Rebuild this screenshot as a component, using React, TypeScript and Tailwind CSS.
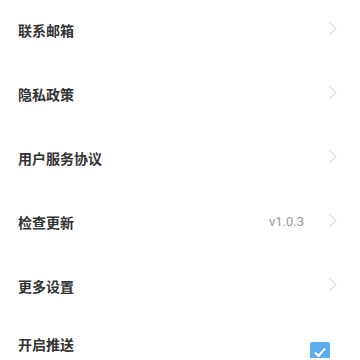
import React from "react";

const Chevron = () => (
  <svg width="9" height="15" viewBox="0 0 9 15" className="-mt-1">
    <polyline points="1,1 8,7.5 1,14" fill="none" stroke="#e0e0e0" strokeWidth="1.3" />
  </svg>
);

const Row = ({ label, value }: { label: string; value?: string }) => (
  <div className="flex h-16 items-center pl-[18px] pr-[23px]">
    <span className="flex-1 text-[14px] font-semibold text-[#333]">{label}</span>
    {value && <span className="mr-[24px] text-[13px] text-[#999]" style={{ fontFamily: "Roboto, sans-serif" }}>{value}</span>}
    <Chevron />
  </div>
);

export default function App() {
  return (
    <div
      className="h-[360px] w-[360px] overflow-hidden bg-white -mt-[2px]"
      style={{ fontFamily: '"Noto Sans CJK SC", "Noto Sans", sans-serif' }}
    >
      <Row label="联系邮箱" />
      <Row label="隐私政策" />
      <Row label="用户服务协议" />
      <Row label="检查更新" value="v1.0.3" />
      <Row label="更多设置" />
      <div className="flex items-start pl-[18px] pr-[30px] pt-4">
        <span className="flex-1 text-[14px] font-semibold text-[#333] leading-5">开启推送</span>
        <div className="mt-2 flex h-5 w-5 items-center justify-center rounded-[2px] bg-[#5aaef0]">
          <svg width="14" height="14" viewBox="0 0 14 14">
            <polyline points="2,7.5 5.5,11 12,3.5" fill="none" stroke="white" strokeWidth="2" />
          </svg>
        </div>
      </div>
    </div>
  );
}
